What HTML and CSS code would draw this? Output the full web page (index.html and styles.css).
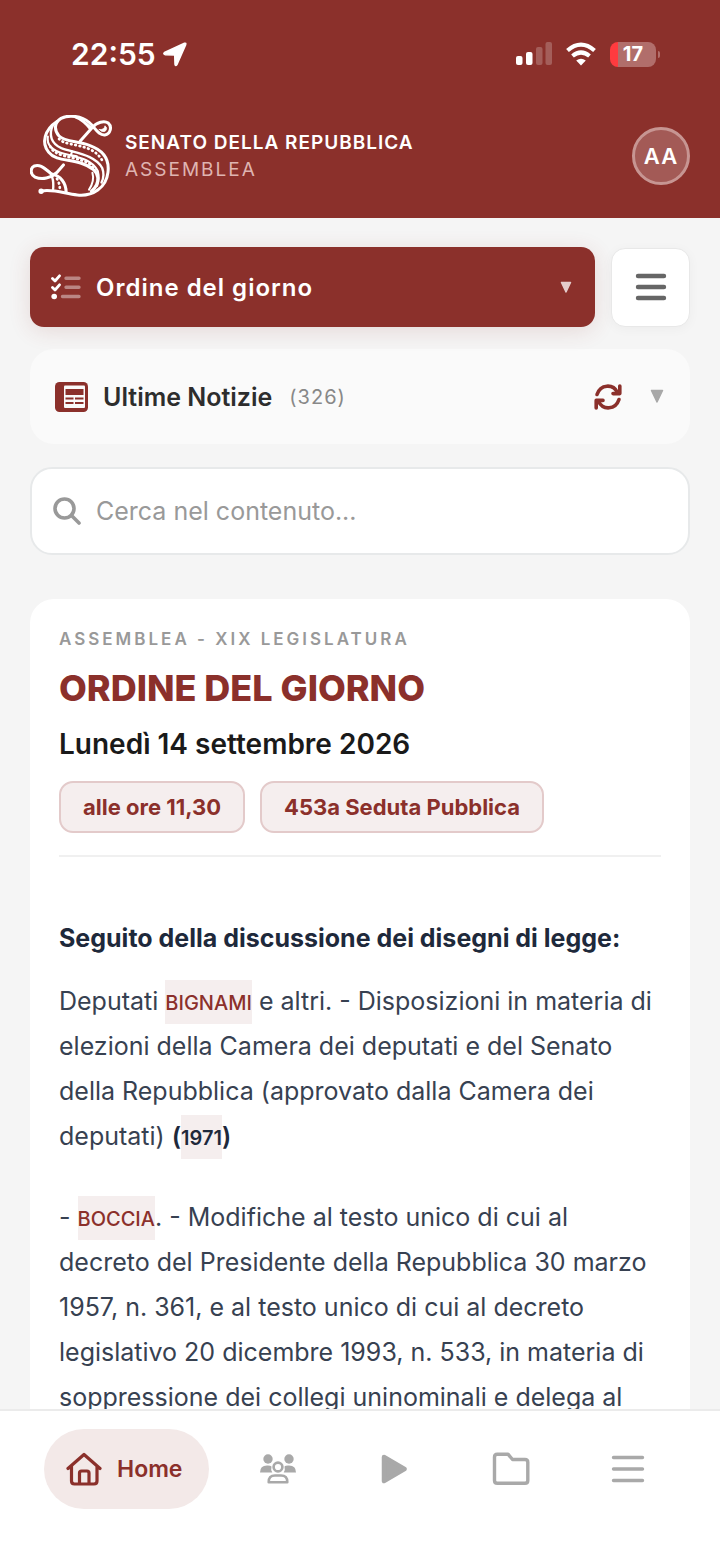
FILE: index.html
```html
<!DOCTYPE html>
<html lang="it">
<head>
<meta charset="utf-8">
<meta name="viewport" content="width=device-width, initial-scale=1">
<title>Senato della Repubblica - Assemblea</title>
<link rel="stylesheet" href="styles.css">
</head>
<body class="app">
<header class="top">
  <div class="status">
    <div class="status-left">
      <span class="clock">22:55</span>
      <svg width="26" height="26" viewBox="0 0 26 26" aria-hidden="true"><path d="M2.5 11.5 22.5 2.2q1.8-.4 1.2 1.4L15 23.5q-1.6 2-2-.2l-.3-9.2-9.4-.4q-2.500-.6-.8-2.200z" fill="#fff" stroke="#fff" stroke-width="1.500" stroke-linejoin="round"/></svg>
    </div>
    <div class="status-right">
      <svg width="36" height="24" viewBox="0 0 36 24" fill="#fff" aria-hidden="true"><rect x="0" y="14" width="6.500" height="9" rx="2"/><rect x="10" y="10" width="6.500" height="13" rx="2"/><g opacity=".22"><rect x="20" y="5" width="6.500" height="18" rx="2"/><rect x="29.500" y="0" width="6.500" height="23" rx="2"/></g></svg>
      <svg width="32" height="24" viewBox="0 0 32 24" fill="none" stroke="#fff" stroke-width="4.200" aria-hidden="true"><path d="M2.500 8.500Q16-3.200 29.500 8.500"/><path d="M7.500 14Q16 7 24.500 14"/><path d="M16 23.500 11.200 18.600Q16 14.800 20.800 18.600Z" fill="#fff" stroke="none"/></svg>
      <div class="battery"><span class="battery-body">17</span><span class="battery-tip"></span></div>
    </div>
  </div>
  <div class="brand">
    <svg class="brand-logo" viewBox="12 15 243 243" fill="none" stroke="#fff" stroke-width="6" stroke-linecap="round" stroke-linejoin="round" aria-hidden="true">
      <path d="M161 92 196 53C210 36 232 31 244 39C256 50 250 72 234 74C214 76 205 52 187 37C165 18 128 13 104 25C82 38 84 62 98 77C114 94 150 92 188 105C228 119 248 146 243 185C238 230 198 257 152 252C118 250 88 234 46 240" stroke-width="9"/>
      <path d="M217 58Q232 60 234 47Q244 54 235 63Q226 68 217 58" fill="#fff" stroke-width="2"/>
      <path d="M146 22C166 30 178 42 188 55M164 28 194 53" stroke-width="6"/>
      <path d="M92 34C55 58 45 98 67 125C87 151 127 145 164 158C194 168 211 181 213 201C214 219 204 233 194 241" stroke-width="9"/>
      <path d="M80 45C66 75 76 101 105 113C142 127 205 132 226 172C232 188 229 205 224 215" stroke-width="7"/>
      <path d="M65 79C60 107 80 121 113 130C157 141 195 146 213 181C217 196 216 212 211 225" stroke-width="6"/>
      <path d="M137 123 133 134 151 137" stroke-width="6"/>
      <path d="M98 86C112 102 152 102 183 114Q216 127 229 156" stroke-dasharray="2 11" stroke-width="8"/>
      <path d="M72 108C82 137 135 138 166 150C187 156 198 166 205 181" stroke-dasharray="2 11" stroke-width="8"/>
      <path d="M197 186Q204 210 187 236"/>
      <path d="M111 163 91 186C74 202 48 208 27 199C12 191 12 172 25 166C46 159 60 180 77 190C102 195 119 216 119 244" stroke-width="9"/>
      <path d="M58 174C79 186 84 207 80 239" stroke-width="7"/>
      <path d="M92 204Q102 222 100 239" stroke-dasharray="2 11" stroke-width="8"/>
      <circle cx="45" cy="241" r="5" fill="#fff"/>
    </svg>
    <div class="brand-text">
      <strong class="brand-name">SENATO DELLA REPUBBLICA</strong>
      <span class="brand-sub">ASSEMBLEA</span>
    </div>
    <button class="avatar" type="button">AA</button>
  </div>
</header>

<main class="content">
  <div class="toolbar">
    <button class="agenda" type="button">
      <svg width="30" height="26" viewBox="0 0 30 26" fill="none" stroke="#fff" stroke-linecap="round" stroke-linejoin="round" aria-hidden="true"><path d="M1.500 4.500 4 7 8.500 1.800M1.500 13.500 4 16 8.500 10.800" stroke-width="2.800"/><circle cx="3.200" cy="22.500" r="2.800" fill="#fff" stroke="none"/><path d="M15 4.200H28M15 13.300H28M11.500 22.500H28" stroke-width="3.400" opacity=".42"/></svg>
      <span class="agenda-label">Ordine del giorno</span>
      <svg width="12" height="13" viewBox="0 0 12 13" aria-hidden="true"><path d="M1.500 1.500h9L6 11z" fill="#e5cccb" stroke="#e5cccb" stroke-width="1.500" stroke-linejoin="round"/></svg>
    </button>
    <button class="menu" type="button" aria-label="Menu">
      <svg width="32" height="28" viewBox="0 0 32 28" stroke="#666" stroke-width="4.400" stroke-linecap="round" aria-hidden="true"><path d="M3 3H29M3 14H29M3 25H29"/></svg>
    </button>
  </div>

  <section class="news">
    <svg width="33" height="30" viewBox="0 0 33 30" aria-hidden="true"><rect width="33" height="30" rx="4.500" fill="#8b302b"/><rect x="9" y="3.500" width="21" height="22.500" rx="1" fill="#fafafa"/><path d="M10.500 7h18v6h-18zM10.500 15.500h8v2h-8zM20 15.500h8.500v2H20zM10.500 20h8v2h-8zM20 20h8.500v2H20z" fill="#8b302b"/></svg>
    <h2 class="news-title">Ultime Notizie</h2>
    <span class="news-count">(326)</span>
    <button class="icon-btn" type="button" aria-label="Aggiorna">
      <svg width="28" height="28" viewBox="0 0 28 28" fill="none" stroke="#8b302b" stroke-width="3.600" stroke-linecap="round" stroke-linejoin="round" aria-hidden="true"><path d="M3 11.500C6.500 1 19 .5 23.500 9.500M25.800 3V10.600H19M25 16.500C21.500 27 9 27.500 4.500 18.500M2.200 25V17.400H9"/></svg>
    </button>
    <button class="icon-btn" type="button" aria-label="Espandi">
      <svg width="14" height="15" viewBox="0 0 14 15" aria-hidden="true"><path d="M1.500 1.500h11L7 13z" fill="#a8a8a8" stroke="#a8a8a8" stroke-width="1.500" stroke-linejoin="round"/></svg>
    </button>
  </section>

  <label class="search">
    <svg width="28" height="28" viewBox="0 0 28 28" fill="none" stroke="#999" stroke-width="3.600" stroke-linecap="round" aria-hidden="true"><circle cx="11.500" cy="11.500" r="9.500"/><path d="M18.500 18.500 26 26"/></svg>
    <input class="search-input" type="text" placeholder="Cerca nel contenuto..." aria-label="Cerca nel contenuto">
  </label>

  <article class="agenda-card">
    <p class="eyebrow">ASSEMBLEA - XIX LEGISLATURA</p>
    <h1 class="title">ORDINE DEL GIORNO</h1>
    <p class="date">Lunedì 14 settembre 2026</p>
    <div class="chips"><span class="chip">alle ore 11,30</span><span class="chip">453a Seduta Pubblica</span></div>
    <h2 class="section-title">Seguito della discussione dei disegni di legge:</h2>
    <p class="entry">Deputati <a class="tag" href="#bignami">BIGNAMI</a> e altri. - Disposizioni in materia di elezioni della Camera dei deputati e del Senato della Repubblica (approvato dalla Camera dei deputati) <b class="bill">(<a class="tag tag-dark" href="#ddl-1971">1971</a>)</b></p>
    <p class="entry">- <a class="tag" href="#boccia">BOCCIA</a>. - Modifiche al testo unico di cui al decreto del Presidente della Repubblica 30 marzo 1957, n. 361, e al testo unico di cui al decreto legislativo 20 dicembre 1993, n. 533, in materia di soppressione dei collegi uninominali e delega al</p>
  </article>
</main>

<nav class="tabs">
  <a class="tab tab-active" href="#home">
    <svg width="36" height="34" viewBox="0 0 36 34" fill="none" stroke="#8b302b" stroke-width="3.200" stroke-linecap="round" stroke-linejoin="round" aria-hidden="true"><path d="M2 16.500 18 2.500 34 16.500M5.500 14V29q0 3 3 3H28q3 0 3-3V14M13.500 32V21q0-2 2-2H21q2 0 2 2V32"/></svg>
    <span>Home</span>
  </a>
  <a class="tab" href="#gruppi" aria-label="Gruppi">
    <svg width="36" height="30" viewBox="0 0 36 30" fill="#a9a9a9" aria-hidden="true"><circle cx="8" cy="5" r="4.700"/><circle cx="29" cy="5" r="4.700"/><path d="M0 18.500Q0 11.500 7 11.500Q10.500 11.300 11.500 12.500Q10.500 16 12.300 18.500ZM36 18.500Q36 11.500 29 11.500Q25.500 11.300 24.500 12.500Q25.500 16 23.700 18.500Z"/><g fill="none" stroke="#a9a9a9" stroke-width="2.600"><circle cx="18" cy="13" r="4.400"/><path d="M8.700 28.200Q8.500 21.500 15 21.500H21Q27.500 21.500 27.300 28.200Z" stroke-linejoin="round"/></g></svg>
  </a>
  <a class="tab" href="#video" aria-label="Video">
    <svg width="26" height="30" viewBox="0 0 26 30" aria-hidden="true"><path d="M3 3 23.500 15 3 27z" fill="#a9a9a9" stroke="#a9a9a9" stroke-width="4.500" stroke-linejoin="round"/></svg>
  </a>
  <a class="tab" href="#documenti" aria-label="Documenti">
    <svg width="38" height="34" viewBox="0 0 38 34" fill="none" stroke="#a9a9a9" stroke-width="3.400" stroke-linejoin="round" aria-hidden="true"><path d="M2.500 5q0-2.800 2.800-2.800H16L20.500 7.500H33q2.800 0 2.800 2.800V28.500q0 2.800-2.800 2.800H5.300q-2.800 0-2.800-2.800Z"/></svg>
  </a>
  <a class="tab" href="#altro" aria-label="Altro">
    <svg width="34" height="28" viewBox="0 0 34 28" stroke="#a9a9a9" stroke-width="3.400" stroke-linecap="round" aria-hidden="true"><path d="M2.500 2.500H31.500M2.500 14H31.500M2.500 25.500H31.500"/></svg>
  </a>
</nav>
</body>
</html>
```

FILE: styles.css
```css
* { box-sizing: border-box; }

.app {
  margin: 0;
  height: 100vh;
  display: flex;
  flex-direction: column;
  background: #f5f5f5;
  font-family: Inter, "Liberation Sans", sans-serif;
  color: #222;
}

button { font: inherit; cursor: pointer; }
a { text-decoration: none; }
h1, h2, p { margin: 0; }
svg { display: block; flex: none; }

.top {
  flex: none;
  background: #8b302b;
  color: #fff;
  padding: 32px 30px 21px;
}
.status {
  display: flex;
  justify-content: space-between;
  align-items: center;
  height: 44px;
  padding: 0 30px 0 41px;
}
.status-left { display: flex; align-items: center; gap: 6px; }
.status-right { display: flex; align-items: center; gap: 13px; }
.clock { font-size: 30px; font-weight: 600; }
.battery { display: flex; align-items: center; gap: 2px; }
.battery-body {
  width: 46px;
  height: 25px;
  border-radius: 8px;
  background: linear-gradient(to right, #ff3b3f 8px, #b16e6b 8px);
  font-size: 20px;
  font-weight: 700;
  line-height: 25px;
  text-align: center;
}
.battery-tip { width: 2px; height: 7px; border-radius: 0 2px 2px 0; background: #b16e6b; }

.brand { display: flex; align-items: center; margin-top: 39px; }
.brand-logo { width: 82px; height: 82px; }
.brand-text { flex: 1; margin-left: 13px; display: flex; flex-direction: column; }
.brand-name { font-size: 19px; line-height: 27px; font-weight: 600; letter-spacing: 1px; }
.brand-sub { font-size: 19px; line-height: 27px; letter-spacing: 2px; color: #dfb4b1; }
.avatar {
  width: 58px;
  height: 58px;
  padding: 0;
  border: 3px solid #c79592;
  border-radius: 50%;
  background: #a35a56;
  color: #fff;
  font-size: 22px;
  font-weight: 600;
  letter-spacing: 1px;
}

.content { flex: 1; min-height: 0; overflow: hidden; padding: 29px 30px 0; }
.toolbar { display: flex; align-items: center; gap: 16px; }
.agenda {
  flex: 1;
  display: flex;
  align-items: center;
  gap: 15px;
  height: 80px;
  padding: 0 23px 0 21px;
  border: 0;
  border-radius: 14px;
  background: #8b302b;
  color: #fff;
  box-shadow: 0 4px 22px rgba(139, 48, 43, .14);
}
.agenda-label { flex: 1; text-align: left; font-size: 24px; font-weight: 600; letter-spacing: 1px; }
.menu {
  display: grid;
  place-items: center;
  width: 79px;
  height: 79px;
  padding: 0;
  border: 1px solid #e8e8e8;
  border-radius: 14px;
  background: #fff;
  box-shadow: 0 2px 12px rgba(0, 0, 0, .04);
}

.news {
  display: flex;
  align-items: center;
  height: 95px;
  margin-top: 22px;
  padding: 0 26px 0 25px;
  border-radius: 24px;
  background: #fafafa;
}
.news-title { margin-left: 15px; font-size: 25px; font-weight: 600; color: #2d2d2d; }
.news-count { flex: 1; margin-left: 17px; font-size: 20px; letter-spacing: 1px; color: #888; }
.icon-btn { padding: 0; border: 0; background: none; margin-left: 28px; }

.search {
  display: flex;
  align-items: center;
  gap: 15px;
  height: 88px;
  margin-top: 23px;
  padding: 0 21px;
  border: 2px solid #e7e9ea;
  border-radius: 22px;
  background: #fff;
}
.search-input {
  flex: 1;
  min-width: 0;
  padding: 0;
  border: 0;
  outline: 0;
  background: none;
  font: inherit;
  font-size: 25px;
  color: #222;
}
.search-input::placeholder { color: #999; opacity: 1; }

.agenda-card {
  margin-top: 44px;
  padding: 25px 29px 30px;
  border-radius: 24px;
  background: #fff;
}
.eyebrow { font-size: 17px; line-height: 30px; font-weight: 600; letter-spacing: 3px; color: #999; }
.title { margin-top: 12px; font-size: 36px; line-height: 44px; font-weight: 800; color: #8b302b; }
.date { margin-top: 16px; font-size: 28px; line-height: 36px; font-weight: 600; color: #1a1a1a; }
.chips {
  display: flex;
  gap: 15px;
  margin-top: 19px;
  padding-bottom: 22px;
  border-bottom: 2px solid #f0f0f0;
}
.chip {
  padding: 0 22px;
  border: 2px solid #e3caca;
  border-radius: 14px;
  background: #f5eeee;
  color: #8b302b;
  font-size: 22px;
  line-height: 48px;
  font-weight: 700;
}
.section-title { margin-top: 59px; font-size: 25px; line-height: 45px; font-weight: 700; color: #1e293b; }
.entry { margin-top: 36px; font-size: 25px; line-height: 45px; color: #374151; }
.section-title + .entry { margin-top: 18px; }
.tag {
  padding: 11px 0 9px;
  background: #f5eeee;
  color: #8b302b;
  font-size: 20px;
  line-height: 20px;
  font-weight: 500;
}
.tag-dark, .bill { color: #1e293b; }
.bill, .tag-dark { font-weight: 600; }

.tabs {
  flex: none;
  display: flex;
  height: 151px;
  padding: 18px 34px 0 44px;
  border-top: 2px solid #ebebeb;
  background: #fff;
}
.tab { flex: 1; display: flex; align-items: center; justify-content: center; height: 80px; }
.tab-active {
  flex: none;
  gap: 15px;
  margin-right: 10px;
  padding: 0 27px 0 22px;
  border-radius: 40px;
  background: #f3e9e8;
  color: #8b302b;
  font-size: 23px;
  font-weight: 600;
}
```
